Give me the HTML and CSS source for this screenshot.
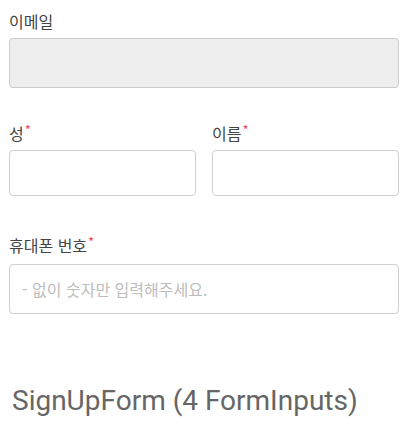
FILE: index.html
```html
<!DOCTYPE html>
<html lang="ko">
<head>
<meta charset="utf-8">
<link rel="stylesheet" href="styles.css">
</head>
<body>
<form class="form">
  <div class="field field-email">
    <label class="label">이메일</label>
    <input class="input input-disabled" type="text" disabled>
  </div>
  <div class="row">
    <div class="field">
      <label class="label">성<span class="req">*</span></label>
      <input class="input input-short" type="text">
    </div>
    <div class="field">
      <label class="label">이름<span class="req">*</span></label>
      <input class="input input-short" type="text">
    </div>
  </div>
  <div class="field field-phone">
    <label class="label label-phone">휴대폰 번호<span class="req">*</span></label>
    <input class="input" type="text" placeholder="- 없이 숫자만 입력해주세요.">
  </div>
</form>
<div class="caption">SignUpForm (4 FormInputs)</div>
</body>
</html>
```
FILE: styles.css
```css
html, body {
  margin: 0;
  padding: 0;
  background: #fff;
}
body {
  font-family: "Noto Sans CJK KR", "Noto Sans", sans-serif;
}
.form {
  width: 390px;
  margin-left: 9px;
  padding-top: 10px;
  display: flex;
  flex-direction: column;
}
.field {
  display: flex;
  flex-direction: column;
  min-width: 0;
}
.row {
  display: grid;
  grid-template-columns: 1fr 1fr;
  column-gap: 16px;
  margin-top: 34px;
}
.field-phone {
  margin-top: 38px;
}
.label {
  font-size: 16px;
  line-height: 22px;
  color: #444;
  margin-bottom: 6px;
}
.label-phone {
  margin-bottom: 8px;
}
.req {
  color: #ef4a5b;
  font-size: 13px;
  vertical-align: top;
  line-height: 15px;
  margin-left: 1px;
}
.input {
  box-sizing: border-box;
  height: 50px;
  width: 100%;
  border: 1px solid #cfcfcf;
  border-radius: 4px;
  background: #fff;
  padding: 0 12px;
  font-family: "Noto Sans CJK KR", "Noto Sans", sans-serif;
  font-size: 16px;
  color: #333;
  margin: 0;
  outline: none;
}
.input::placeholder {
  color: #bdbdbd;
}
.input-short {
  height: 46px;
}
.input-disabled {
  background: #eeeeee;
  border-color: #cccccc;
}
.caption {
  margin-top: 71px;
  margin-left: 12px;
  font-family: Roboto, "Liberation Sans", sans-serif;
  font-size: 28px;
  line-height: 32px;
  color: #666;
}
```
